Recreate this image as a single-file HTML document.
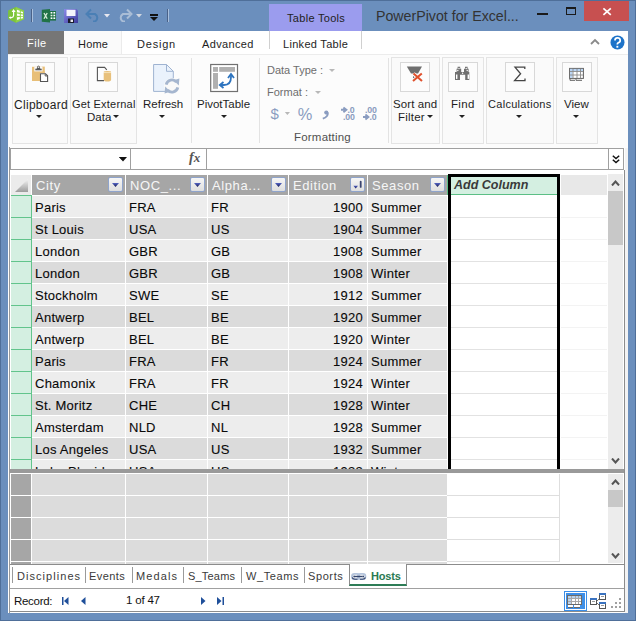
<!DOCTYPE html><html><head><meta charset="utf-8"><style>
*{margin:0;padding:0;box-sizing:border-box}
html,body{width:636px;height:621px;overflow:hidden}
body{position:relative;background:#6b8fbd;font-family:"Liberation Sans",sans-serif;color:#222}
body>div,body>svg{position:absolute}
.t{white-space:nowrap;line-height:1}
.d{-webkit-text-stroke:0.1px #000}
</style></head><body>
<div style="left:0px;top:0px;width:636px;height:1px;background:#4f6f99"></div>
<div style="left:0px;top:0px;width:1px;height:621px;background:#4f6f99"></div>
<div style="left:635px;top:0px;width:1px;height:621px;background:#4f6f99"></div>
<div style="left:0px;top:620px;width:636px;height:1px;background:#4f6f99"></div>
<svg style="left:6px;top:5px" width="20" height="20" viewBox="0 0 20 20">
<path d="M9.8 2 L17.9 5.4 L17.9 14.2 L9.8 17.8 L2.1 13.9 L2.1 5.5 Z" fill="#7cc43a"/>
<path d="M9.8 2 L17.9 5.4 L17.9 14.2 L9.8 17.8 Z" fill="#8fd14a"/>
<path d="M7.6 5.5 V10.5 Q7.6 12.3 5.5 12.6 L4 12.6" stroke="#fff" stroke-width="1.2" fill="none"/>
<path d="M5.6 7 L7.6 4 L9.6 7 Z" fill="#fff"/>
<path d="M4.6 11.3 L2.8 12.6 L4.6 14 Z" fill="#fff"/>
<path d="M11 4.8 L13.8 5.8 V7.8 L11 7.2 Z M14.8 6.3 L17 7 V8.6 L14.8 8.1 Z M11 8.6 L13.8 9 V11 L11 10.8 Z M14.8 9.2 L17 9.4 V11 L14.8 11 Z M11 12.2 L13.8 11.9 V14 L11 15 Z M14.8 11.8 L17 11.7 V13.2 L14.8 13.7 Z" fill="#fff"/>
</svg>
<div style="left:31px;top:9px;width:1px;height:13px;background:#4a6288"></div>
<div style="left:32px;top:9px;width:1px;height:13px;background:#a9c0dd"></div>
<svg style="left:41px;top:9px" width="16" height="14" viewBox="0 0 16 14">
<rect x="8.5" y="2" width="6.5" height="9.6" fill="#1e7145"/>
<rect x="9.6" y="3" width="1.8" height="1.6" fill="#fff"/><rect x="12.4" y="3" width="1.8" height="1.6" fill="#fff"/>
<rect x="9.6" y="5.7" width="1.8" height="1.6" fill="#e8f2ea"/><rect x="12.4" y="5.7" width="1.8" height="1.6" fill="#fff"/>
<rect x="9.6" y="8.4" width="1.8" height="1.6" fill="#fff"/><rect x="12.4" y="8.4" width="1.8" height="1.6" fill="#fff"/>
<path d="M0.8 0.8 L9 0 L9 13.5 L0.8 12.8 Z" fill="#217346"/>
<path d="M3 4 L6.2 9.8 M6.2 4 L3 9.8" stroke="#d8ecd8" stroke-width="1.3"/>
</svg>
<svg style="left:64px;top:9px" width="14" height="14" viewBox="0 0 14 14">
<defs><linearGradient id="sv" x1="0" y1="0" x2="1" y2="1"><stop offset="0" stop-color="#8a8ae8"/><stop offset="1" stop-color="#3c3c9c"/></linearGradient></defs>
<path d="M0 0 H12.5 L14 1.5 V14 H0 Z" fill="url(#sv)"/>
<rect x="2.5" y="0.8" width="9" height="6.2" fill="#f4f4fb"/>
<rect x="4" y="9.5" width="6" height="4.5" fill="#1a1a2a"/>
<rect x="6.5" y="10.5" width="2.5" height="2.5" fill="#e8e8f0"/>
</svg>
<svg style="left:85px;top:8px" width="16" height="14" viewBox="0 0 16 14">
<path d="M3 6 H10 A4.2 4.2 0 0 1 10 13.5 H8" stroke="#4a7fb5" stroke-width="2" fill="none"/>
<path d="M6 1.5 L1.5 6 L6 10.5" stroke="#4a7fb5" stroke-width="2" fill="none"/>
</svg>
<svg style="left:104px;top:14px" width="6" height="4" viewBox="0 0 6 4"><path d="M0 0H6L3 3.5Z" fill="#e8e8f0"/></svg>
<svg style="left:117px;top:8px" width="16" height="14" viewBox="0 0 16 14">
<path d="M13 6 H6 A4.2 4.2 0 0 0 6 13.5 H8" stroke="#a9bdd6" stroke-width="2" fill="none"/>
<path d="M10 1.5 L14.5 6 L10 10.5" stroke="#a9bdd6" stroke-width="2" fill="none"/>
</svg>
<svg style="left:136px;top:14px" width="6" height="4" viewBox="0 0 6 4"><path d="M0 0H6L3 3.5Z" fill="#d0d6e0"/></svg>
<div style="left:150px;top:14px;width:8px;height:2px;background:#111"></div>
<svg style="left:150px;top:17px" width="8" height="4" viewBox="0 0 8 4"><path d="M0 0H8L4 4Z" fill="#111"/></svg>
<div style="left:167px;top:9px;width:1px;height:13px;background:#4a6288"></div>
<div style="left:168px;top:9px;width:1px;height:13px;background:#a9c0dd"></div>
<div style="left:269px;top:4px;width:93px;height:27px;background:#9b9cee"></div>
<div class="t" style="left:287px;top:13px;font-size:11px;color:#222;letter-spacing:0.3px">Table Tools</div>
<div class="t" style="left:376px;top:9px;font-size:14.2px;color:#333">PowerPivot for Excel...</div>
<div style="left:537px;top:13px;width:11px;height:2px;background:#1a1a1a"></div>
<div style="left:566px;top:7px;width:10px;height:8px;border:1px solid #1a1a1a;border-top-width:2px"></div>
<div style="left:584px;top:1px;width:45px;height:20px;background:#c75050"></div>
<svg style="left:600px;top:5px" width="14" height="13" viewBox="600 5 14 13">
<path d="M603.4 8.3 L610.8 14.8 M610.8 8.3 L603.4 14.8" stroke="#fff" stroke-width="1.7"/></svg>
<div style="left:8px;top:31px;width:620px;height:582px;background:#fff"></div>
<div style="left:8px;top:31px;width:56px;height:23px;background:#767676"></div>
<div class="t" style="left:27px;top:38px;font-size:11px;color:#fff;letter-spacing:0.5px">File</div>
<div style="left:64px;top:31px;width:58px;height:24px;background:#fafafa;border-right:1px solid #ebebeb"></div>
<div class="t" style="left:78px;top:39px;font-size:11px;color:#1e1e1e;letter-spacing:0.2px">Home</div>
<div class="t" style="left:137px;top:39px;font-size:11px;color:#1e1e1e;letter-spacing:0.8px">Design</div>
<div class="t" style="left:202px;top:39px;font-size:11px;color:#1e1e1e;letter-spacing:0.35px">Advanced</div>
<div style="left:269px;top:31px;width:1px;height:18px;background:#d0d0d0"></div>
<div style="left:361px;top:31px;width:1px;height:18px;background:#d0d0d0"></div>
<div class="t" style="left:283px;top:39px;font-size:11px;color:#1e1e1e;letter-spacing:0.3px">Linked Table</div>
<svg style="left:590px;top:38px" width="10" height="7" viewBox="0 0 10 7">
<path d="M1 6 L5 2 L9 6" stroke="#8a8a8a" stroke-width="1.8" fill="none"/></svg>
<svg style="left:610px;top:35px" width="15" height="15" viewBox="0 0 15 15">
<circle cx="7.5" cy="7.5" r="7" fill="#1d73c9"/>
<path d="M5 5.5 A2.6 2.5 0 1 1 8.2 7.8 C7.4 8.2 7.3 8.6 7.3 9.6" stroke="#fff" stroke-width="1.7" fill="none"/>
<rect x="6.4" y="10.8" width="1.9" height="1.9" fill="#fff"/></svg>
<div style="left:8px;top:54px;width:620px;height:94px;background:#fcfcfc;border-top:1px solid #ececec"></div>
<div style="left:12px;top:57px;width:56px;height:87px;border:1px solid #e4e4e4;background:#fafafa"></div>
<div style="left:25px;top:62px;width:30px;height:30px;border:1px solid #d8d8d8;background:#fcfcfc"></div>
<div class="t" style="left:14px;top:99px;font-size:12px;color:#1e1e1e;letter-spacing:0.3px">Clipboard</div>
<svg style="left:36px;top:115px" width="6" height="3" viewBox="0 0 6 3"><path d="M0 0H6L3 3Z" fill="#222"/></svg>
<div style="left:70px;top:57px;width:67px;height:87px;border:1px solid #e4e4e4;background:#fafafa"></div>
<div style="left:88px;top:62px;width:30px;height:30px;border:1px solid #d8d8d8;background:#fcfcfc"></div>
<div class="t" style="left:72px;top:99px;font-size:11px;color:#1e1e1e;letter-spacing:0.2px">Get External</div>
<div class="t" style="left:87px;top:112px;font-size:11.5px;color:#1e1e1e">Data</div>
<svg style="left:113px;top:115px" width="6" height="3" viewBox="0 0 6 3"><path d="M0 0H6L3 3Z" fill="#222"/></svg>
<svg style="left:30px;top:64px" width="20" height="20" viewBox="30 64 20 20">
<path d="M32 67 H34.6 V71.6 H44.8 V67 H42 V66.8 H44.8 V73 H40 V81 H32 Z" fill="#e8bf78"/>
<rect x="32" y="66.8" width="12.8" height="6.2" fill="#e8bf78"/>
<rect x="34.3" y="66.8" width="8.2" height="4.6" fill="#fafafa"/>
<path d="M35.3 69.5 H41.7" stroke="#5a5a5a" stroke-width="1.6"/>
<circle cx="38.5" cy="67.2" r="1.1" fill="none" stroke="#5a5a5a" stroke-width="0.9"/>
<rect x="36.8" y="68" width="3.4" height="1.4" fill="#5a5a5a"/>
<path d="M40.5 73.7 H45.5 L47.6 75.8 V81.5 H40.5 Z" fill="#fff" stroke="#555" stroke-width="1.1"/>
<path d="M45.2 73.9 V76 H47.4" fill="none" stroke="#555" stroke-width="0.9"/>
</svg>
<svg style="left:94px;top:64px" width="20" height="20" viewBox="94 64 20 20">
<path d="M104 80.6 H97.4 V67.4 H104.6 L106.8 69.8" fill="none" stroke="#555" stroke-width="1.1"/>
<path d="M103.7 72.8 H111.1 V79.5 Q111.1 81.6 107.4 81.6 Q103.7 81.6 103.7 79.5 Z" fill="#e8c07a"/>
<ellipse cx="107.4" cy="71.8" rx="3.7" ry="0.9" fill="#e8c07a"/>
<path d="M103.7 72.6 H111.1" stroke="#f6e3bd" stroke-width="0.8"/>
</svg>
<div style="left:191px;top:58px;width:1px;height:85px;background:#e3e3e3"></div>
<div style="left:259px;top:58px;width:1px;height:85px;background:#e3e3e3"></div>
<div style="left:388px;top:58px;width:1px;height:85px;background:#e3e3e3"></div>
<svg style="left:150px;top:62px" width="32" height="32" viewBox="150 62 32 32">
<path d="M153.6 64.5 H166.5 L173.3 71.3 V91.4 H153.6 Z" fill="#eaf2fc" stroke="#9fb3d1" stroke-width="1"/>
<path d="M166.5 64.5 V71.3 H173.3" fill="none" stroke="#9fb3d1" stroke-width="1"/>
<circle cx="172" cy="86" r="8" fill="#f9f9f9"/>
<path d="M166.2 84.6 A5.9 5.9 0 0 1 176.4 82" stroke="#a5b6cf" stroke-width="2.8" fill="none"/>
<path d="M177.8 87.4 A5.9 5.9 0 0 1 167.6 90" stroke="#a5b6cf" stroke-width="2.8" fill="none"/>
<path d="M173.6 80.2 L179.4 78.6 L178.8 85.4 Z" fill="#a5b6cf"/>
<path d="M170.4 91.8 L164.6 93.4 L165.2 86.6 Z" fill="#a5b6cf"/>
</svg>
<div class="t" style="left:143px;top:99px;font-size:11.5px;color:#1e1e1e">Refresh</div>
<svg style="left:159px;top:115px" width="6" height="3" viewBox="0 0 6 3"><path d="M0 0H6L3 3Z" fill="#222"/></svg>
<svg style="left:208px;top:62px" width="32" height="32" viewBox="208 62 32 32">
<rect x="210.7" y="64.5" width="26.8" height="27" fill="#fff" stroke="#707070" stroke-width="1.2"/>
<rect x="213" y="67" width="5" height="4.8" fill="#b0b0b0"/>
<rect x="219.2" y="67" width="15.8" height="4.8" fill="#b0b0b0"/>
<rect x="213" y="73" width="5" height="15.8" fill="#b0b0b0"/>
<path d="M220.5 85 H224 Q231 85 231 77 V74.5" stroke="#2e74bf" stroke-width="1.8" fill="none"/>
<path d="M228 78 L231 74 L234 78" stroke="#2e74bf" stroke-width="1.8" fill="none"/>
<path d="M223.5 82 L219.8 85 L223.5 88" stroke="#2e74bf" stroke-width="1.8" fill="none"/>
</svg>
<div class="t" style="left:197px;top:99px;font-size:11.5px;color:#1e1e1e">PivotTable</div>
<svg style="left:221px;top:115px" width="6" height="3" viewBox="0 0 6 3"><path d="M0 0H6L3 3Z" fill="#222"/></svg>
<div class="t" style="left:267px;top:65px;font-size:11px;color:#6e6e6e">Data Type :</div>
<svg style="left:329px;top:69px" width="6" height="3" viewBox="0 0 6 3"><path d="M0 0H6L3 3Z" fill="#b8b8b8"/></svg>
<div class="t" style="left:267px;top:87px;font-size:11px;color:#6e6e6e">Format :</div>
<svg style="left:315px;top:91px" width="6" height="3" viewBox="0 0 6 3"><path d="M0 0H6L3 3Z" fill="#b8b8b8"/></svg>
<svg style="left:266px;top:104px" width="120" height="20" viewBox="266 104 120 20">
<text x="270.6" y="119.4" font-size="15" font-family="Liberation Sans" fill="#8a9cc0">$</text>
<path d="M284.8 112 H290 L287.4 115 Z" fill="#b8b8b8"/>
<text x="297.8" y="119.6" font-size="16.4" font-family="Liberation Sans" fill="#8a9cc0">%</text>
<circle cx="326.3" cy="112.6" r="2.1" fill="#8a9cc0"/>
<path d="M327.9 112.6 Q328.2 116.8 322.8 118.6" stroke="#8a9cc0" stroke-width="1.8" fill="none"/>
<path d="M341 109.8 H346 M343.4 107.4 L346.4 109.8 L343.4 112.2" stroke="#8a9cc0" stroke-width="1.9" fill="none"/>
<text x="347.6" y="112.8" font-size="8.8" font-weight="bold" font-family="Liberation Sans" fill="#8a9cc0" letter-spacing="-0.2">.0</text>
<text x="343" y="119.9" font-size="8.8" font-weight="bold" font-family="Liberation Sans" fill="#8a9cc0" letter-spacing="-0.2">.00</text>
<text x="365" y="112.8" font-size="8.8" font-weight="bold" font-family="Liberation Sans" fill="#8a9cc0" letter-spacing="-0.2">.00</text>
<path d="M363 117 H368 M365.4 114.6 L368.4 117 L365.4 119.4" stroke="#8a9cc0" stroke-width="1.9" fill="none"/>
<text x="369.6" y="119.9" font-size="8.8" font-weight="bold" font-family="Liberation Sans" fill="#8a9cc0" letter-spacing="-0.2">.0</text>
</svg>
<div class="t" style="left:294px;top:132px;font-size:11.5px;color:#505050;letter-spacing:0.2px">Formatting</div>
<div style="left:391px;top:57px;width:49px;height:87px;border:1px solid #e4e4e4;background:#fafafa"></div>
<div style="left:400px;top:62px;width:30px;height:30px;border:1px solid #d8d8d8;background:#fcfcfc"></div>
<svg style="left:404px;top:64px" width="22" height="20" viewBox="404 64 22 20">
<path d="M406.8 66.6 H422 L418 73.4 H411 Z" fill="#6e6e6e"/>
<path d="M413 76 L415 77.2 L413 78.4 Z" fill="#6e6e6e"/>
<path d="M413.5 73.5 L422 81 M421.8 73.5 L413 81" stroke="#fafafa" stroke-width="3.6"/>
<path d="M413.5 73.5 L422 81 M421.8 73.5 L413 81" stroke="#e0502c" stroke-width="2"/>
</svg>
<div class="t" style="left:393px;top:99px;font-size:11.5px;color:#1e1e1e;letter-spacing:0.1px">Sort and</div>
<div class="t" style="left:398px;top:112px;font-size:11.5px;color:#1e1e1e;letter-spacing:0.2px">Filter</div>
<svg style="left:427px;top:115px" width="6" height="3" viewBox="0 0 6 3"><path d="M0 0H6L3 3Z" fill="#222"/></svg>
<div style="left:442px;top:57px;width:42px;height:87px;border:1px solid #e4e4e4;background:#fafafa"></div>
<div style="left:448px;top:62px;width:30px;height:30px;border:1px solid #d8d8d8;background:#fcfcfc"></div>
<svg style="left:454px;top:66px" width="18" height="16" viewBox="454 66 18 16">
<path d="M457.6 66.8 H460.2 V68.8 H461.2 V72 H464 V68.8 H465 V66.8 H467.6 V68.8 H468.6 V72 H469.3 V80 H465.2 V74.8 H460 V80 H455 V72 H456.6 V68.8 H457.6 Z" fill="#707070"/>
<rect x="456" y="74.5" width="1.4" height="4.4" fill="#fff"/>
<rect x="467.6" y="74.5" width="1.4" height="4.4" fill="#fff"/>
<circle cx="459" cy="68.5" r="0.7" fill="#fff"/><circle cx="466.2" cy="68.5" r="0.7" fill="#fff"/>
<circle cx="457.8" cy="70.5" r="0.7" fill="#fff"/><circle cx="467.2" cy="70.5" r="0.7" fill="#fff"/>
<circle cx="462.6" cy="73.2" r="0.7" fill="#fff"/>
</svg>
<div class="t" style="left:451px;top:99px;font-size:11.5px;color:#1e1e1e;letter-spacing:0.3px">Find</div>
<svg style="left:459px;top:115px" width="6" height="3" viewBox="0 0 6 3"><path d="M0 0H6L3 3Z" fill="#222"/></svg>
<div style="left:486px;top:57px;width:68px;height:87px;border:1px solid #e4e4e4;background:#fafafa"></div>
<div style="left:505px;top:62px;width:30px;height:30px;border:1px solid #d8d8d8;background:#fcfcfc"></div>
<svg style="left:512px;top:64px" width="16" height="20" viewBox="512 64 16 20">
<path d="M524.8 69 V67.2 H515 L520.6 73.8 L514.6 80.6 H525 V78.6" fill="none" stroke="#454545" stroke-width="1.3"/>
</svg>
<div class="t" style="left:488px;top:99px;font-size:11px;color:#1e1e1e;letter-spacing:0.3px">Calculations</div>
<svg style="left:516px;top:115px" width="6" height="3" viewBox="0 0 6 3"><path d="M0 0H6L3 3Z" fill="#222"/></svg>
<div style="left:556px;top:57px;width:42px;height:87px;border:1px solid #e4e4e4;background:#fafafa"></div>
<div style="left:562px;top:62px;width:30px;height:30px;border:1px solid #d8d8d8;background:#fcfcfc"></div>
<svg style="left:568px;top:66px" width="18" height="16" viewBox="568 66 18 16">
<rect x="569.6" y="68.4" width="13.8" height="10" fill="#fff" stroke="#606060" stroke-width="1"/>
<rect x="570.1" y="68.9" width="12.8" height="2.3" fill="#b8d4f4"/>
<rect x="570.1" y="68.9" width="2.4" height="9" fill="#b8d4f4"/>
<path d="M570 71.5 H583 M570 75 H583 M573 69 V78.4 M577 69 V78.4 M580.5 69 V78.4" stroke="#8a8a8a" stroke-width="0.9"/>
<path d="M570 78.4 V80.3 H575 M576 78.4 V80.3 H582" fill="none" stroke="#606060" stroke-width="1"/>
</svg>
<div class="t" style="left:564px;top:99px;font-size:11.5px;color:#1e1e1e">View</div>
<svg style="left:573px;top:115px" width="6" height="3" viewBox="0 0 6 3"><path d="M0 0H6L3 3Z" fill="#222"/></svg>
<div style="left:9px;top:147px;width:1px;height:466px;background:#999"></div>
<div style="left:10px;top:148px;width:614px;height:22px;border:1px solid #a0a0a0;background:#fff"></div>
<div style="left:130px;top:148px;width:1px;height:22px;background:#a0a0a0"></div>
<div style="left:206px;top:148px;width:1px;height:22px;background:#a0a0a0"></div>
<div style="left:608px;top:148px;width:1px;height:22px;background:#a0a0a0"></div>
<svg style="left:119px;top:157px" width="6" height="3" viewBox="0 0 6 3"><path d="M0 0H6L3 3Z" fill="#111"/></svg>
<svg style="left:119px;top:157px" width="8" height="5" viewBox="0 0 8 5"><path d="M0 0H8L4 4.5Z" fill="#111"/></svg>
<div class="t" style="left:189px;top:151px;font-size:14px;color:#555;font-family:Liberation Serif,serif;font-weight:bold"><i>f</i><i style="font-size:13px;margin-left:0px">x</i></div>
<svg style="left:612px;top:155px" width="8" height="9" viewBox="0 0 8 9">
<path d="M0.8 0.8 L4 3.5 L7.2 0.8 M0.8 4.8 L4 7.5 L7.2 4.8" stroke="#111" stroke-width="1.5" fill="none"/></svg>
<div style="left:624px;top:170px;width:1px;height:442px;background:#8c8c8c"></div>
<div style="left:625px;top:148px;width:3px;height:465px;background:#f3f3f3"></div>
<div style="left:11px;top:175px;width:20px;height:20px;background:#ebebeb"></div>
<svg style="left:15px;top:179px" width="14" height="14" viewBox="0 0 14 14">
<defs><linearGradient id="g1" x1="0" y1="0" x2="0" y2="1"><stop offset="0" stop-color="#f4f4f4"/><stop offset="1" stop-color="#9c9c9c"/></linearGradient></defs>
<path d="M13 0 V13 H0 Z" fill="url(#g1)"/></svg>
<div style="left:32px;top:175px;width:93px;height:20px;background:#a6a6a6"></div>
<div class="t" style="left:36px;top:179px;font-size:13px;color:#f6f6f6;letter-spacing:0.6px">City</div>
<div style="left:108px;top:177px;width:15px;height:15px;background:linear-gradient(#f6f6f6,#dedede);border:1px solid #8fa4cc;border-radius:2px"></div>
<svg style="left:112px;top:183px" width="7" height="4" viewBox="0 0 7 4">
<defs><linearGradient id="ag108" x1="0" y1="0" x2="0" y2="1"><stop offset="0" stop-color="#5566c8"/><stop offset="1" stop-color="#141850"/></linearGradient></defs>
<path d="M0 0H7L3.5 4Z" fill="url(#ag108)"/></svg>
<div style="left:126px;top:175px;width:81px;height:20px;background:#a6a6a6"></div>
<div class="t" style="left:130px;top:179px;font-size:13px;color:#f6f6f6;letter-spacing:0.6px">NOC_...</div>
<div style="left:190px;top:177px;width:15px;height:15px;background:linear-gradient(#f6f6f6,#dedede);border:1px solid #8fa4cc;border-radius:2px"></div>
<svg style="left:194px;top:183px" width="7" height="4" viewBox="0 0 7 4">
<defs><linearGradient id="ag190" x1="0" y1="0" x2="0" y2="1"><stop offset="0" stop-color="#5566c8"/><stop offset="1" stop-color="#141850"/></linearGradient></defs>
<path d="M0 0H7L3.5 4Z" fill="url(#ag190)"/></svg>
<div style="left:208px;top:175px;width:80px;height:20px;background:#a6a6a6"></div>
<div class="t" style="left:212px;top:179px;font-size:13px;color:#f6f6f6;letter-spacing:0.6px">Alpha...</div>
<div style="left:271px;top:177px;width:15px;height:15px;background:linear-gradient(#f6f6f6,#dedede);border:1px solid #8fa4cc;border-radius:2px"></div>
<svg style="left:275px;top:183px" width="7" height="4" viewBox="0 0 7 4">
<defs><linearGradient id="ag271" x1="0" y1="0" x2="0" y2="1"><stop offset="0" stop-color="#5566c8"/><stop offset="1" stop-color="#141850"/></linearGradient></defs>
<path d="M0 0H7L3.5 4Z" fill="url(#ag271)"/></svg>
<div style="left:289px;top:175px;width:78px;height:20px;background:#a6a6a6"></div>
<div class="t" style="left:293px;top:179px;font-size:13px;color:#f6f6f6;letter-spacing:0.6px">Edition</div>
<div style="left:350px;top:177px;width:15px;height:15px;background:linear-gradient(#f6f6f6,#dedede);border:1px solid #8fa4cc;border-radius:2px"></div>
<svg style="left:353px;top:180px" width="10" height="9" viewBox="0 0 10 9">
<defs><linearGradient id="ag2" x1="0" y1="0" x2="0" y2="1"><stop offset="0" stop-color="#4a5cc0"/><stop offset="1" stop-color="#151850"/></linearGradient></defs>
<path d="M0.4 5.8H5L2.7 8.6Z" fill="url(#ag2)"/><rect x="6.8" y="0.8" width="1.8" height="7" rx="0.9" fill="#3a4470"/></svg>
<div style="left:368px;top:175px;width:79px;height:20px;background:#a6a6a6"></div>
<div class="t" style="left:372px;top:179px;font-size:13px;color:#f6f6f6;letter-spacing:0.6px">Season</div>
<div style="left:430px;top:177px;width:15px;height:15px;background:linear-gradient(#f6f6f6,#dedede);border:1px solid #8fa4cc;border-radius:2px"></div>
<svg style="left:434px;top:183px" width="7" height="4" viewBox="0 0 7 4">
<defs><linearGradient id="ag430" x1="0" y1="0" x2="0" y2="1"><stop offset="0" stop-color="#5566c8"/><stop offset="1" stop-color="#141850"/></linearGradient></defs>
<path d="M0 0H7L3.5 4Z" fill="url(#ag430)"/></svg>
<div style="left:448px;top:174px;width:112px;height:296px;border:3px solid #000;border-bottom:none"></div>
<div style="left:451px;top:177px;width:106px;height:18px;background:#d4efe1;border-bottom:1px solid #5cbf86"></div>
<div style="left:447px;top:175px;width:1px;height:20px;background:#5cbf86"></div>
<div class="t" style="left:454px;top:179px;font-size:12.5px;color:#3a3a3a"><b><i>Add Column</i></b></div>
<div style="left:561px;top:175px;width:46px;height:20px;background:#e8e8e8"></div>
<div style="left:10px;top:195px;width:614px;height:274px;overflow:hidden;background:#fff">
<div style="position:absolute;left:1px;top:0px;width:21px;height:23px;background:#d4efe1;border-top:1px solid #62c48c;border-bottom:1px solid #62c48c;border-right:1px solid #62c48c"></div>
<div style="position:absolute;left:22px;top:1px;width:93px;height:21px;background:#ededed"></div>
<div class="t" style="position:absolute;left:25px;top:6px;font-size:13px;color:#0a0a0a;letter-spacing:0.25px;-webkit-text-stroke:0.1px #000">Paris</div>
<div style="position:absolute;left:116px;top:1px;width:81px;height:21px;background:#ededed"></div>
<div class="t" style="position:absolute;left:119px;top:6px;font-size:13px;color:#0a0a0a;letter-spacing:0.25px;-webkit-text-stroke:0.1px #000">FRA</div>
<div style="position:absolute;left:198px;top:1px;width:80px;height:21px;background:#ededed"></div>
<div class="t" style="position:absolute;left:201px;top:6px;font-size:13px;color:#0a0a0a;letter-spacing:0.25px;-webkit-text-stroke:0.1px #000">FR</div>
<div style="position:absolute;left:279px;top:1px;width:78px;height:21px;background:#ededed"></div>
<div class="t" style="position:absolute;left:279px;width:74px;text-align:right;top:6px;font-size:13px;color:#0a0a0a;letter-spacing:0.25px;-webkit-text-stroke:0.1px #000">1900</div>
<div style="position:absolute;left:358px;top:1px;width:79px;height:21px;background:#ededed"></div>
<div class="t" style="position:absolute;left:361px;top:6px;font-size:13px;color:#0a0a0a;letter-spacing:0.25px;-webkit-text-stroke:0.1px #000">Summer</div>
<div style="position:absolute;left:441px;top:22px;width:106px;height:1px;background:#e2e2e2"></div>
<div style="position:absolute;left:551px;top:22px;width:46px;height:1px;background:#f3f3f3"></div>
<div style="position:absolute;left:1px;top:22px;width:21px;height:23px;background:#d4efe1;border-top:1px solid #62c48c;border-bottom:1px solid #62c48c;border-right:1px solid #62c48c"></div>
<div style="position:absolute;left:22px;top:23px;width:93px;height:21px;background:#dbdbdb"></div>
<div class="t" style="position:absolute;left:25px;top:28px;font-size:13px;color:#0a0a0a;letter-spacing:0.25px;-webkit-text-stroke:0.1px #000">St Louis</div>
<div style="position:absolute;left:116px;top:23px;width:81px;height:21px;background:#dbdbdb"></div>
<div class="t" style="position:absolute;left:119px;top:28px;font-size:13px;color:#0a0a0a;letter-spacing:0.25px;-webkit-text-stroke:0.1px #000">USA</div>
<div style="position:absolute;left:198px;top:23px;width:80px;height:21px;background:#dbdbdb"></div>
<div class="t" style="position:absolute;left:201px;top:28px;font-size:13px;color:#0a0a0a;letter-spacing:0.25px;-webkit-text-stroke:0.1px #000">US</div>
<div style="position:absolute;left:279px;top:23px;width:78px;height:21px;background:#dbdbdb"></div>
<div class="t" style="position:absolute;left:279px;width:74px;text-align:right;top:28px;font-size:13px;color:#0a0a0a;letter-spacing:0.25px;-webkit-text-stroke:0.1px #000">1904</div>
<div style="position:absolute;left:358px;top:23px;width:79px;height:21px;background:#dbdbdb"></div>
<div class="t" style="position:absolute;left:361px;top:28px;font-size:13px;color:#0a0a0a;letter-spacing:0.25px;-webkit-text-stroke:0.1px #000">Summer</div>
<div style="position:absolute;left:441px;top:44px;width:106px;height:1px;background:#e2e2e2"></div>
<div style="position:absolute;left:551px;top:44px;width:46px;height:1px;background:#f3f3f3"></div>
<div style="position:absolute;left:1px;top:44px;width:21px;height:23px;background:#d4efe1;border-top:1px solid #62c48c;border-bottom:1px solid #62c48c;border-right:1px solid #62c48c"></div>
<div style="position:absolute;left:22px;top:45px;width:93px;height:21px;background:#ededed"></div>
<div class="t" style="position:absolute;left:25px;top:50px;font-size:13px;color:#0a0a0a;letter-spacing:0.25px;-webkit-text-stroke:0.1px #000">London</div>
<div style="position:absolute;left:116px;top:45px;width:81px;height:21px;background:#ededed"></div>
<div class="t" style="position:absolute;left:119px;top:50px;font-size:13px;color:#0a0a0a;letter-spacing:0.25px;-webkit-text-stroke:0.1px #000">GBR</div>
<div style="position:absolute;left:198px;top:45px;width:80px;height:21px;background:#ededed"></div>
<div class="t" style="position:absolute;left:201px;top:50px;font-size:13px;color:#0a0a0a;letter-spacing:0.25px;-webkit-text-stroke:0.1px #000">GB</div>
<div style="position:absolute;left:279px;top:45px;width:78px;height:21px;background:#ededed"></div>
<div class="t" style="position:absolute;left:279px;width:74px;text-align:right;top:50px;font-size:13px;color:#0a0a0a;letter-spacing:0.25px;-webkit-text-stroke:0.1px #000">1908</div>
<div style="position:absolute;left:358px;top:45px;width:79px;height:21px;background:#ededed"></div>
<div class="t" style="position:absolute;left:361px;top:50px;font-size:13px;color:#0a0a0a;letter-spacing:0.25px;-webkit-text-stroke:0.1px #000">Summer</div>
<div style="position:absolute;left:441px;top:66px;width:106px;height:1px;background:#e2e2e2"></div>
<div style="position:absolute;left:551px;top:66px;width:46px;height:1px;background:#f3f3f3"></div>
<div style="position:absolute;left:1px;top:66px;width:21px;height:23px;background:#d4efe1;border-top:1px solid #62c48c;border-bottom:1px solid #62c48c;border-right:1px solid #62c48c"></div>
<div style="position:absolute;left:22px;top:67px;width:93px;height:21px;background:#dbdbdb"></div>
<div class="t" style="position:absolute;left:25px;top:72px;font-size:13px;color:#0a0a0a;letter-spacing:0.25px;-webkit-text-stroke:0.1px #000">London</div>
<div style="position:absolute;left:116px;top:67px;width:81px;height:21px;background:#dbdbdb"></div>
<div class="t" style="position:absolute;left:119px;top:72px;font-size:13px;color:#0a0a0a;letter-spacing:0.25px;-webkit-text-stroke:0.1px #000">GBR</div>
<div style="position:absolute;left:198px;top:67px;width:80px;height:21px;background:#dbdbdb"></div>
<div class="t" style="position:absolute;left:201px;top:72px;font-size:13px;color:#0a0a0a;letter-spacing:0.25px;-webkit-text-stroke:0.1px #000">GB</div>
<div style="position:absolute;left:279px;top:67px;width:78px;height:21px;background:#dbdbdb"></div>
<div class="t" style="position:absolute;left:279px;width:74px;text-align:right;top:72px;font-size:13px;color:#0a0a0a;letter-spacing:0.25px;-webkit-text-stroke:0.1px #000">1908</div>
<div style="position:absolute;left:358px;top:67px;width:79px;height:21px;background:#dbdbdb"></div>
<div class="t" style="position:absolute;left:361px;top:72px;font-size:13px;color:#0a0a0a;letter-spacing:0.25px;-webkit-text-stroke:0.1px #000">Winter</div>
<div style="position:absolute;left:441px;top:88px;width:106px;height:1px;background:#e2e2e2"></div>
<div style="position:absolute;left:551px;top:88px;width:46px;height:1px;background:#f3f3f3"></div>
<div style="position:absolute;left:1px;top:88px;width:21px;height:23px;background:#d4efe1;border-top:1px solid #62c48c;border-bottom:1px solid #62c48c;border-right:1px solid #62c48c"></div>
<div style="position:absolute;left:22px;top:89px;width:93px;height:21px;background:#ededed"></div>
<div class="t" style="position:absolute;left:25px;top:94px;font-size:13px;color:#0a0a0a;letter-spacing:0.25px;-webkit-text-stroke:0.1px #000">Stockholm</div>
<div style="position:absolute;left:116px;top:89px;width:81px;height:21px;background:#ededed"></div>
<div class="t" style="position:absolute;left:119px;top:94px;font-size:13px;color:#0a0a0a;letter-spacing:0.25px;-webkit-text-stroke:0.1px #000">SWE</div>
<div style="position:absolute;left:198px;top:89px;width:80px;height:21px;background:#ededed"></div>
<div class="t" style="position:absolute;left:201px;top:94px;font-size:13px;color:#0a0a0a;letter-spacing:0.25px;-webkit-text-stroke:0.1px #000">SE</div>
<div style="position:absolute;left:279px;top:89px;width:78px;height:21px;background:#ededed"></div>
<div class="t" style="position:absolute;left:279px;width:74px;text-align:right;top:94px;font-size:13px;color:#0a0a0a;letter-spacing:0.25px;-webkit-text-stroke:0.1px #000">1912</div>
<div style="position:absolute;left:358px;top:89px;width:79px;height:21px;background:#ededed"></div>
<div class="t" style="position:absolute;left:361px;top:94px;font-size:13px;color:#0a0a0a;letter-spacing:0.25px;-webkit-text-stroke:0.1px #000">Summer</div>
<div style="position:absolute;left:441px;top:110px;width:106px;height:1px;background:#e2e2e2"></div>
<div style="position:absolute;left:551px;top:110px;width:46px;height:1px;background:#f3f3f3"></div>
<div style="position:absolute;left:1px;top:110px;width:21px;height:23px;background:#d4efe1;border-top:1px solid #62c48c;border-bottom:1px solid #62c48c;border-right:1px solid #62c48c"></div>
<div style="position:absolute;left:22px;top:111px;width:93px;height:21px;background:#dbdbdb"></div>
<div class="t" style="position:absolute;left:25px;top:116px;font-size:13px;color:#0a0a0a;letter-spacing:0.25px;-webkit-text-stroke:0.1px #000">Antwerp</div>
<div style="position:absolute;left:116px;top:111px;width:81px;height:21px;background:#dbdbdb"></div>
<div class="t" style="position:absolute;left:119px;top:116px;font-size:13px;color:#0a0a0a;letter-spacing:0.25px;-webkit-text-stroke:0.1px #000">BEL</div>
<div style="position:absolute;left:198px;top:111px;width:80px;height:21px;background:#dbdbdb"></div>
<div class="t" style="position:absolute;left:201px;top:116px;font-size:13px;color:#0a0a0a;letter-spacing:0.25px;-webkit-text-stroke:0.1px #000">BE</div>
<div style="position:absolute;left:279px;top:111px;width:78px;height:21px;background:#dbdbdb"></div>
<div class="t" style="position:absolute;left:279px;width:74px;text-align:right;top:116px;font-size:13px;color:#0a0a0a;letter-spacing:0.25px;-webkit-text-stroke:0.1px #000">1920</div>
<div style="position:absolute;left:358px;top:111px;width:79px;height:21px;background:#dbdbdb"></div>
<div class="t" style="position:absolute;left:361px;top:116px;font-size:13px;color:#0a0a0a;letter-spacing:0.25px;-webkit-text-stroke:0.1px #000">Summer</div>
<div style="position:absolute;left:441px;top:132px;width:106px;height:1px;background:#e2e2e2"></div>
<div style="position:absolute;left:551px;top:132px;width:46px;height:1px;background:#f3f3f3"></div>
<div style="position:absolute;left:1px;top:132px;width:21px;height:23px;background:#d4efe1;border-top:1px solid #62c48c;border-bottom:1px solid #62c48c;border-right:1px solid #62c48c"></div>
<div style="position:absolute;left:22px;top:133px;width:93px;height:21px;background:#ededed"></div>
<div class="t" style="position:absolute;left:25px;top:138px;font-size:13px;color:#0a0a0a;letter-spacing:0.25px;-webkit-text-stroke:0.1px #000">Antwerp</div>
<div style="position:absolute;left:116px;top:133px;width:81px;height:21px;background:#ededed"></div>
<div class="t" style="position:absolute;left:119px;top:138px;font-size:13px;color:#0a0a0a;letter-spacing:0.25px;-webkit-text-stroke:0.1px #000">BEL</div>
<div style="position:absolute;left:198px;top:133px;width:80px;height:21px;background:#ededed"></div>
<div class="t" style="position:absolute;left:201px;top:138px;font-size:13px;color:#0a0a0a;letter-spacing:0.25px;-webkit-text-stroke:0.1px #000">BE</div>
<div style="position:absolute;left:279px;top:133px;width:78px;height:21px;background:#ededed"></div>
<div class="t" style="position:absolute;left:279px;width:74px;text-align:right;top:138px;font-size:13px;color:#0a0a0a;letter-spacing:0.25px;-webkit-text-stroke:0.1px #000">1920</div>
<div style="position:absolute;left:358px;top:133px;width:79px;height:21px;background:#ededed"></div>
<div class="t" style="position:absolute;left:361px;top:138px;font-size:13px;color:#0a0a0a;letter-spacing:0.25px;-webkit-text-stroke:0.1px #000">Winter</div>
<div style="position:absolute;left:441px;top:154px;width:106px;height:1px;background:#e2e2e2"></div>
<div style="position:absolute;left:551px;top:154px;width:46px;height:1px;background:#f3f3f3"></div>
<div style="position:absolute;left:1px;top:154px;width:21px;height:23px;background:#d4efe1;border-top:1px solid #62c48c;border-bottom:1px solid #62c48c;border-right:1px solid #62c48c"></div>
<div style="position:absolute;left:22px;top:155px;width:93px;height:21px;background:#dbdbdb"></div>
<div class="t" style="position:absolute;left:25px;top:160px;font-size:13px;color:#0a0a0a;letter-spacing:0.25px;-webkit-text-stroke:0.1px #000">Paris</div>
<div style="position:absolute;left:116px;top:155px;width:81px;height:21px;background:#dbdbdb"></div>
<div class="t" style="position:absolute;left:119px;top:160px;font-size:13px;color:#0a0a0a;letter-spacing:0.25px;-webkit-text-stroke:0.1px #000">FRA</div>
<div style="position:absolute;left:198px;top:155px;width:80px;height:21px;background:#dbdbdb"></div>
<div class="t" style="position:absolute;left:201px;top:160px;font-size:13px;color:#0a0a0a;letter-spacing:0.25px;-webkit-text-stroke:0.1px #000">FR</div>
<div style="position:absolute;left:279px;top:155px;width:78px;height:21px;background:#dbdbdb"></div>
<div class="t" style="position:absolute;left:279px;width:74px;text-align:right;top:160px;font-size:13px;color:#0a0a0a;letter-spacing:0.25px;-webkit-text-stroke:0.1px #000">1924</div>
<div style="position:absolute;left:358px;top:155px;width:79px;height:21px;background:#dbdbdb"></div>
<div class="t" style="position:absolute;left:361px;top:160px;font-size:13px;color:#0a0a0a;letter-spacing:0.25px;-webkit-text-stroke:0.1px #000">Summer</div>
<div style="position:absolute;left:441px;top:176px;width:106px;height:1px;background:#e2e2e2"></div>
<div style="position:absolute;left:551px;top:176px;width:46px;height:1px;background:#f3f3f3"></div>
<div style="position:absolute;left:1px;top:176px;width:21px;height:23px;background:#d4efe1;border-top:1px solid #62c48c;border-bottom:1px solid #62c48c;border-right:1px solid #62c48c"></div>
<div style="position:absolute;left:22px;top:177px;width:93px;height:21px;background:#ededed"></div>
<div class="t" style="position:absolute;left:25px;top:182px;font-size:13px;color:#0a0a0a;letter-spacing:0.25px;-webkit-text-stroke:0.1px #000">Chamonix</div>
<div style="position:absolute;left:116px;top:177px;width:81px;height:21px;background:#ededed"></div>
<div class="t" style="position:absolute;left:119px;top:182px;font-size:13px;color:#0a0a0a;letter-spacing:0.25px;-webkit-text-stroke:0.1px #000">FRA</div>
<div style="position:absolute;left:198px;top:177px;width:80px;height:21px;background:#ededed"></div>
<div class="t" style="position:absolute;left:201px;top:182px;font-size:13px;color:#0a0a0a;letter-spacing:0.25px;-webkit-text-stroke:0.1px #000">FR</div>
<div style="position:absolute;left:279px;top:177px;width:78px;height:21px;background:#ededed"></div>
<div class="t" style="position:absolute;left:279px;width:74px;text-align:right;top:182px;font-size:13px;color:#0a0a0a;letter-spacing:0.25px;-webkit-text-stroke:0.1px #000">1924</div>
<div style="position:absolute;left:358px;top:177px;width:79px;height:21px;background:#ededed"></div>
<div class="t" style="position:absolute;left:361px;top:182px;font-size:13px;color:#0a0a0a;letter-spacing:0.25px;-webkit-text-stroke:0.1px #000">Winter</div>
<div style="position:absolute;left:441px;top:198px;width:106px;height:1px;background:#e2e2e2"></div>
<div style="position:absolute;left:551px;top:198px;width:46px;height:1px;background:#f3f3f3"></div>
<div style="position:absolute;left:1px;top:198px;width:21px;height:23px;background:#d4efe1;border-top:1px solid #62c48c;border-bottom:1px solid #62c48c;border-right:1px solid #62c48c"></div>
<div style="position:absolute;left:22px;top:199px;width:93px;height:21px;background:#dbdbdb"></div>
<div class="t" style="position:absolute;left:25px;top:204px;font-size:13px;color:#0a0a0a;letter-spacing:0.25px;-webkit-text-stroke:0.1px #000">St. Moritz</div>
<div style="position:absolute;left:116px;top:199px;width:81px;height:21px;background:#dbdbdb"></div>
<div class="t" style="position:absolute;left:119px;top:204px;font-size:13px;color:#0a0a0a;letter-spacing:0.25px;-webkit-text-stroke:0.1px #000">CHE</div>
<div style="position:absolute;left:198px;top:199px;width:80px;height:21px;background:#dbdbdb"></div>
<div class="t" style="position:absolute;left:201px;top:204px;font-size:13px;color:#0a0a0a;letter-spacing:0.25px;-webkit-text-stroke:0.1px #000">CH</div>
<div style="position:absolute;left:279px;top:199px;width:78px;height:21px;background:#dbdbdb"></div>
<div class="t" style="position:absolute;left:279px;width:74px;text-align:right;top:204px;font-size:13px;color:#0a0a0a;letter-spacing:0.25px;-webkit-text-stroke:0.1px #000">1928</div>
<div style="position:absolute;left:358px;top:199px;width:79px;height:21px;background:#dbdbdb"></div>
<div class="t" style="position:absolute;left:361px;top:204px;font-size:13px;color:#0a0a0a;letter-spacing:0.25px;-webkit-text-stroke:0.1px #000">Winter</div>
<div style="position:absolute;left:441px;top:220px;width:106px;height:1px;background:#e2e2e2"></div>
<div style="position:absolute;left:551px;top:220px;width:46px;height:1px;background:#f3f3f3"></div>
<div style="position:absolute;left:1px;top:220px;width:21px;height:23px;background:#d4efe1;border-top:1px solid #62c48c;border-bottom:1px solid #62c48c;border-right:1px solid #62c48c"></div>
<div style="position:absolute;left:22px;top:221px;width:93px;height:21px;background:#ededed"></div>
<div class="t" style="position:absolute;left:25px;top:226px;font-size:13px;color:#0a0a0a;letter-spacing:0.25px;-webkit-text-stroke:0.1px #000">Amsterdam</div>
<div style="position:absolute;left:116px;top:221px;width:81px;height:21px;background:#ededed"></div>
<div class="t" style="position:absolute;left:119px;top:226px;font-size:13px;color:#0a0a0a;letter-spacing:0.25px;-webkit-text-stroke:0.1px #000">NLD</div>
<div style="position:absolute;left:198px;top:221px;width:80px;height:21px;background:#ededed"></div>
<div class="t" style="position:absolute;left:201px;top:226px;font-size:13px;color:#0a0a0a;letter-spacing:0.25px;-webkit-text-stroke:0.1px #000">NL</div>
<div style="position:absolute;left:279px;top:221px;width:78px;height:21px;background:#ededed"></div>
<div class="t" style="position:absolute;left:279px;width:74px;text-align:right;top:226px;font-size:13px;color:#0a0a0a;letter-spacing:0.25px;-webkit-text-stroke:0.1px #000">1928</div>
<div style="position:absolute;left:358px;top:221px;width:79px;height:21px;background:#ededed"></div>
<div class="t" style="position:absolute;left:361px;top:226px;font-size:13px;color:#0a0a0a;letter-spacing:0.25px;-webkit-text-stroke:0.1px #000">Summer</div>
<div style="position:absolute;left:441px;top:242px;width:106px;height:1px;background:#e2e2e2"></div>
<div style="position:absolute;left:551px;top:242px;width:46px;height:1px;background:#f3f3f3"></div>
<div style="position:absolute;left:1px;top:242px;width:21px;height:23px;background:#d4efe1;border-top:1px solid #62c48c;border-bottom:1px solid #62c48c;border-right:1px solid #62c48c"></div>
<div style="position:absolute;left:22px;top:243px;width:93px;height:21px;background:#dbdbdb"></div>
<div class="t" style="position:absolute;left:25px;top:248px;font-size:13px;color:#0a0a0a;letter-spacing:0.25px;-webkit-text-stroke:0.1px #000">Los Angeles</div>
<div style="position:absolute;left:116px;top:243px;width:81px;height:21px;background:#dbdbdb"></div>
<div class="t" style="position:absolute;left:119px;top:248px;font-size:13px;color:#0a0a0a;letter-spacing:0.25px;-webkit-text-stroke:0.1px #000">USA</div>
<div style="position:absolute;left:198px;top:243px;width:80px;height:21px;background:#dbdbdb"></div>
<div class="t" style="position:absolute;left:201px;top:248px;font-size:13px;color:#0a0a0a;letter-spacing:0.25px;-webkit-text-stroke:0.1px #000">US</div>
<div style="position:absolute;left:279px;top:243px;width:78px;height:21px;background:#dbdbdb"></div>
<div class="t" style="position:absolute;left:279px;width:74px;text-align:right;top:248px;font-size:13px;color:#0a0a0a;letter-spacing:0.25px;-webkit-text-stroke:0.1px #000">1932</div>
<div style="position:absolute;left:358px;top:243px;width:79px;height:21px;background:#dbdbdb"></div>
<div class="t" style="position:absolute;left:361px;top:248px;font-size:13px;color:#0a0a0a;letter-spacing:0.25px;-webkit-text-stroke:0.1px #000">Summer</div>
<div style="position:absolute;left:441px;top:264px;width:106px;height:1px;background:#e2e2e2"></div>
<div style="position:absolute;left:551px;top:264px;width:46px;height:1px;background:#f3f3f3"></div>
<div style="position:absolute;left:1px;top:264px;width:21px;height:23px;background:#d4efe1;border-top:1px solid #62c48c;border-bottom:1px solid #62c48c;border-right:1px solid #62c48c"></div>
<div style="position:absolute;left:22px;top:265px;width:93px;height:21px;background:#ededed"></div>
<div class="t" style="position:absolute;left:25px;top:270px;font-size:13px;color:#0a0a0a;letter-spacing:0.25px;-webkit-text-stroke:0.1px #000">Lake Placid</div>
<div style="position:absolute;left:116px;top:265px;width:81px;height:21px;background:#ededed"></div>
<div class="t" style="position:absolute;left:119px;top:270px;font-size:13px;color:#0a0a0a;letter-spacing:0.25px;-webkit-text-stroke:0.1px #000">USA</div>
<div style="position:absolute;left:198px;top:265px;width:80px;height:21px;background:#ededed"></div>
<div class="t" style="position:absolute;left:201px;top:270px;font-size:13px;color:#0a0a0a;letter-spacing:0.25px;-webkit-text-stroke:0.1px #000">US</div>
<div style="position:absolute;left:279px;top:265px;width:78px;height:21px;background:#ededed"></div>
<div class="t" style="position:absolute;left:279px;width:74px;text-align:right;top:270px;font-size:13px;color:#0a0a0a;letter-spacing:0.25px;-webkit-text-stroke:0.1px #000">1932</div>
<div style="position:absolute;left:358px;top:265px;width:79px;height:21px;background:#ededed"></div>
<div class="t" style="position:absolute;left:361px;top:270px;font-size:13px;color:#0a0a0a;letter-spacing:0.25px;-webkit-text-stroke:0.1px #000">Winter</div>
<div style="position:absolute;left:441px;top:286px;width:106px;height:1px;background:#e2e2e2"></div>
<div style="position:absolute;left:551px;top:286px;width:46px;height:1px;background:#f3f3f3"></div>
</div>
<div style="left:448px;top:195px;width:3px;height:274px;background:#000"></div>
<div style="left:557px;top:195px;width:3px;height:274px;background:#000"></div>
<div style="left:608px;top:174px;width:15px;height:295px;background:#ececec"></div>
<div style="left:608px;top:191px;width:15px;height:54px;background:#c8c8c8"></div>
<svg style="left:611px;top:180px" width="9" height="6" viewBox="0 0 9 6"><path d="M1 5.5 L4.5 1.5 L8 5.5" stroke="#555" stroke-width="2" fill="none"/></svg>
<svg style="left:611px;top:458px" width="9" height="6" viewBox="0 0 9 6"><path d="M1 0.5 L4.5 4.5 L8 0.5" stroke="#555" stroke-width="2" fill="none"/></svg>
<div style="left:10px;top:469px;width:614px;height:4px;background:#9a9a9a"></div>
<div style="left:10px;top:473px;width:614px;height:91px;background:#fff"></div>
<div style="left:11px;top:474px;width:20px;height:21px;background:#a6a6a6"></div>
<div style="left:32px;top:474px;width:93px;height:21px;background:#dcdcdc"></div>
<div style="left:126px;top:474px;width:81px;height:21px;background:#dcdcdc"></div>
<div style="left:208px;top:474px;width:80px;height:21px;background:#dcdcdc"></div>
<div style="left:289px;top:474px;width:78px;height:21px;background:#dcdcdc"></div>
<div style="left:368px;top:474px;width:79px;height:21px;background:#dcdcdc"></div>
<div style="left:447px;top:495px;width:113px;height:1px;background:#dedede"></div>
<div style="left:11px;top:496px;width:20px;height:21px;background:#a6a6a6"></div>
<div style="left:32px;top:496px;width:93px;height:21px;background:#dcdcdc"></div>
<div style="left:126px;top:496px;width:81px;height:21px;background:#dcdcdc"></div>
<div style="left:208px;top:496px;width:80px;height:21px;background:#dcdcdc"></div>
<div style="left:289px;top:496px;width:78px;height:21px;background:#dcdcdc"></div>
<div style="left:368px;top:496px;width:79px;height:21px;background:#dcdcdc"></div>
<div style="left:447px;top:517px;width:113px;height:1px;background:#dedede"></div>
<div style="left:11px;top:518px;width:20px;height:21px;background:#a6a6a6"></div>
<div style="left:32px;top:518px;width:93px;height:21px;background:#dcdcdc"></div>
<div style="left:126px;top:518px;width:81px;height:21px;background:#dcdcdc"></div>
<div style="left:208px;top:518px;width:80px;height:21px;background:#dcdcdc"></div>
<div style="left:289px;top:518px;width:78px;height:21px;background:#dcdcdc"></div>
<div style="left:368px;top:518px;width:79px;height:21px;background:#dcdcdc"></div>
<div style="left:447px;top:539px;width:113px;height:1px;background:#dedede"></div>
<div style="left:11px;top:540px;width:20px;height:21px;background:#a6a6a6"></div>
<div style="left:32px;top:540px;width:93px;height:21px;background:#dcdcdc"></div>
<div style="left:126px;top:540px;width:81px;height:21px;background:#dcdcdc"></div>
<div style="left:208px;top:540px;width:80px;height:21px;background:#dcdcdc"></div>
<div style="left:289px;top:540px;width:78px;height:21px;background:#dcdcdc"></div>
<div style="left:368px;top:540px;width:79px;height:21px;background:#dcdcdc"></div>
<div style="left:447px;top:561px;width:113px;height:1px;background:#dedede"></div>
<div style="left:559px;top:474px;width:1px;height:88px;background:#dedede"></div>
<div style="left:608px;top:474px;width:15px;height:89px;background:#ececec"></div>
<div style="left:608px;top:490px;width:15px;height:17px;background:#c8c8c8"></div>
<svg style="left:611px;top:479px" width="9" height="6" viewBox="0 0 9 6"><path d="M1 5.5 L4.5 1.5 L8 5.5" stroke="#555" stroke-width="2" fill="none"/></svg>
<svg style="left:611px;top:553px" width="9" height="6" viewBox="0 0 9 6"><path d="M1 0.5 L4.5 4.5 L8 0.5" stroke="#555" stroke-width="2" fill="none"/></svg>
<div style="left:32px;top:562px;width:93px;height:2px;background:#dcdcdc"></div>
<div style="left:126px;top:562px;width:81px;height:2px;background:#dcdcdc"></div>
<div style="left:208px;top:562px;width:80px;height:2px;background:#dcdcdc"></div>
<div style="left:289px;top:562px;width:78px;height:2px;background:#dcdcdc"></div>
<div style="left:368px;top:562px;width:79px;height:2px;background:#dcdcdc"></div>
<div style="left:11px;top:562px;width:20px;height:2px;background:#a6a6a6"></div>
<div style="left:10px;top:564px;width:614px;height:1px;background:#8c8c8c"></div>
<div style="left:12px;top:567px;width:1px;height:16px;background:#9a9a9a"></div>
<div class="t" style="left:17px;top:571px;font-size:11px;color:#3a3a3a;letter-spacing:1.05px">Disciplines</div>
<div style="left:85px;top:567px;width:1px;height:16px;background:#9a9a9a"></div>
<div class="t" style="left:89px;top:571px;font-size:11px;color:#3a3a3a;letter-spacing:0.4px">Events</div>
<div style="left:132px;top:567px;width:1px;height:16px;background:#9a9a9a"></div>
<div class="t" style="left:136px;top:571px;font-size:11px;color:#3a3a3a;letter-spacing:1.1px">Medals</div>
<div style="left:183px;top:567px;width:1px;height:16px;background:#9a9a9a"></div>
<div class="t" style="left:188px;top:571px;font-size:11px;color:#3a3a3a;letter-spacing:0.2px">S_Teams</div>
<div style="left:241px;top:567px;width:1px;height:16px;background:#9a9a9a"></div>
<div class="t" style="left:246px;top:571px;font-size:11px;color:#3a3a3a;letter-spacing:0.6px">W_Teams</div>
<div style="left:304px;top:567px;width:1px;height:16px;background:#9a9a9a"></div>
<div class="t" style="left:308px;top:571px;font-size:11px;color:#3a3a3a;letter-spacing:0.6px">Sports</div>
<div style="left:349px;top:564px;width:58px;height:22px;background:#fff;border-left:1px solid #8c8c8c;border-right:1px solid #8c8c8c;border-bottom:2px solid #2e7d57"></div>
<svg style="left:350px;top:572px" width="18" height="9" viewBox="350 572 18 9">
<rect x="352" y="573.8" width="7.4" height="5.4" rx="2.4" fill="none" stroke="#b4c4dc" stroke-width="1.8"/>
<rect x="358" y="573.8" width="7.4" height="5.4" rx="2.4" fill="none" stroke="#b4c4dc" stroke-width="1.8"/>
<path d="M352.2 577.5 Q352.6 579.2 355 579.2 H357.5 M360 579.2 H362.5 Q365 579.2 365.4 577.5" stroke="#34466e" stroke-width="1.1" fill="none"/>
<path d="M355 576.5 H362.5" stroke="#34466e" stroke-width="1.4"/>
<circle cx="354.2" cy="576.5" r="0.9" fill="#34466e"/><circle cx="363.2" cy="576.5" r="0.9" fill="#34466e"/>
</svg>
<div class="t" style="left:371px;top:571px;font-size:11px;color:#2a7a52;letter-spacing:-0.2px"><b>Hosts</b></div>
<div style="left:10px;top:588px;width:614px;height:1px;background:#a0a0a0"></div>
<div class="t" style="left:14px;top:596px;font-size:11.5px;color:#111;letter-spacing:-0.3px">Record:</div>
<svg style="left:62px;top:597px" width="7" height="8" viewBox="0 0 7 8"><rect x="0" y="0" width="1.5" height="8" fill="#1f4f9a"/><path d="M6.5 0 V8 L2 4Z" fill="#1f4f9a"/></svg>
<svg style="left:81px;top:597px" width="5" height="8" viewBox="0 0 5 8"><path d="M4.5 0 V8 L0 4Z" fill="#1f4f9a"/></svg>
<div class="t" style="left:126px;top:595px;font-size:11.5px;color:#111;letter-spacing:-0.2px">1 of 47</div>
<svg style="left:201px;top:597px" width="5" height="8" viewBox="0 0 5 8"><path d="M0 0 V8 L4.5 4Z" fill="#1f4f9a"/></svg>
<svg style="left:217px;top:597px" width="7" height="8" viewBox="0 0 7 8"><path d="M0 0 V8 L4.5 4Z" fill="#1f4f9a"/><rect x="5.5" y="0" width="1.5" height="8" fill="#1f4f9a"/></svg>
<div style="left:10px;top:611px;width:615px;height:1px;background:#8c8c8c"></div>
<div style="left:564px;top:591px;width:23px;height:20px;border:1px solid #3b8ee8;background:#fff"></div>
<div style="left:566px;top:593px;width:19px;height:16px;background:#3d8fe8"></div>
<svg style="left:560px;top:588px" width="50" height="25" viewBox="560 588 50 25" shape-rendering="crispEdges">
<rect x="567" y="595" width="15" height="10" fill="#fff"/>
<rect x="567" y="595" width="15" height="3" fill="#b9d3ef"/>
<rect x="567" y="595" width="4" height="10" fill="#b9d3ef"/>
<rect x="567" y="595" width="15" height="1" fill="#6a6a6a"/>
<rect x="567" y="604" width="15" height="1" fill="#6a6a6a"/>
<rect x="567" y="595" width="1" height="10" fill="#6a6a6a"/>
<rect x="581" y="595" width="1" height="10" fill="#6a6a6a"/>
<rect x="568" y="598" width="13" height="1" fill="#a8a8a8"/>
<rect x="568" y="601" width="13" height="1" fill="#a8a8a8"/>
<rect x="571" y="596" width="1" height="8" fill="#a8a8a8"/>
<rect x="575" y="596" width="1" height="8" fill="#a8a8a8"/>
<rect x="578" y="596" width="1" height="8" fill="#a8a8a8"/>
<rect x="568" y="605" width="5" height="2" fill="#fff"/><rect x="568" y="607" width="5" height="1" fill="#6a6a6a"/>
<rect x="574" y="605" width="6" height="2" fill="#fff"/><rect x="574" y="607" width="6" height="1" fill="#6a6a6a"/>
<g fill="#555">
<rect x="590" y="598" width="7" height="7"/><rect x="599" y="593" width="7" height="7"/><rect x="599" y="602" width="7" height="7"/>
</g>
<g fill="#fff">
<rect x="591" y="600" width="5" height="4"/><rect x="600" y="595" width="5" height="4"/><rect x="600" y="604" width="5" height="4"/>
</g>
<g fill="#3a72c0">
<rect x="590" y="598" width="7" height="2"/><rect x="599" y="593" width="7" height="2"/><rect x="599" y="602" width="7" height="2"/>
</g>
<g fill="#999">
<rect x="592" y="601" width="3" height="1"/><rect x="601" y="596" width="3" height="1"/><rect x="601" y="605" width="3" height="1"/>
</g>
<rect x="597" y="600" width="1" height="1" fill="#777"/><rect x="598" y="599" width="1" height="1" fill="#777"/>
<rect x="597" y="603" width="1" height="1" fill="#777"/><rect x="598" y="604" width="1" height="1" fill="#777"/>
</svg>
<div style="left:619px;top:598px;width:2px;height:2px;background:#a0a0a0"></div>
<div style="left:615px;top:602px;width:2px;height:2px;background:#a0a0a0"></div>
<div style="left:619px;top:602px;width:2px;height:2px;background:#a0a0a0"></div>
<div style="left:611px;top:606px;width:2px;height:2px;background:#a0a0a0"></div>
<div style="left:615px;top:606px;width:2px;height:2px;background:#a0a0a0"></div>
<div style="left:619px;top:606px;width:2px;height:2px;background:#a0a0a0"></div>
</body></html>
